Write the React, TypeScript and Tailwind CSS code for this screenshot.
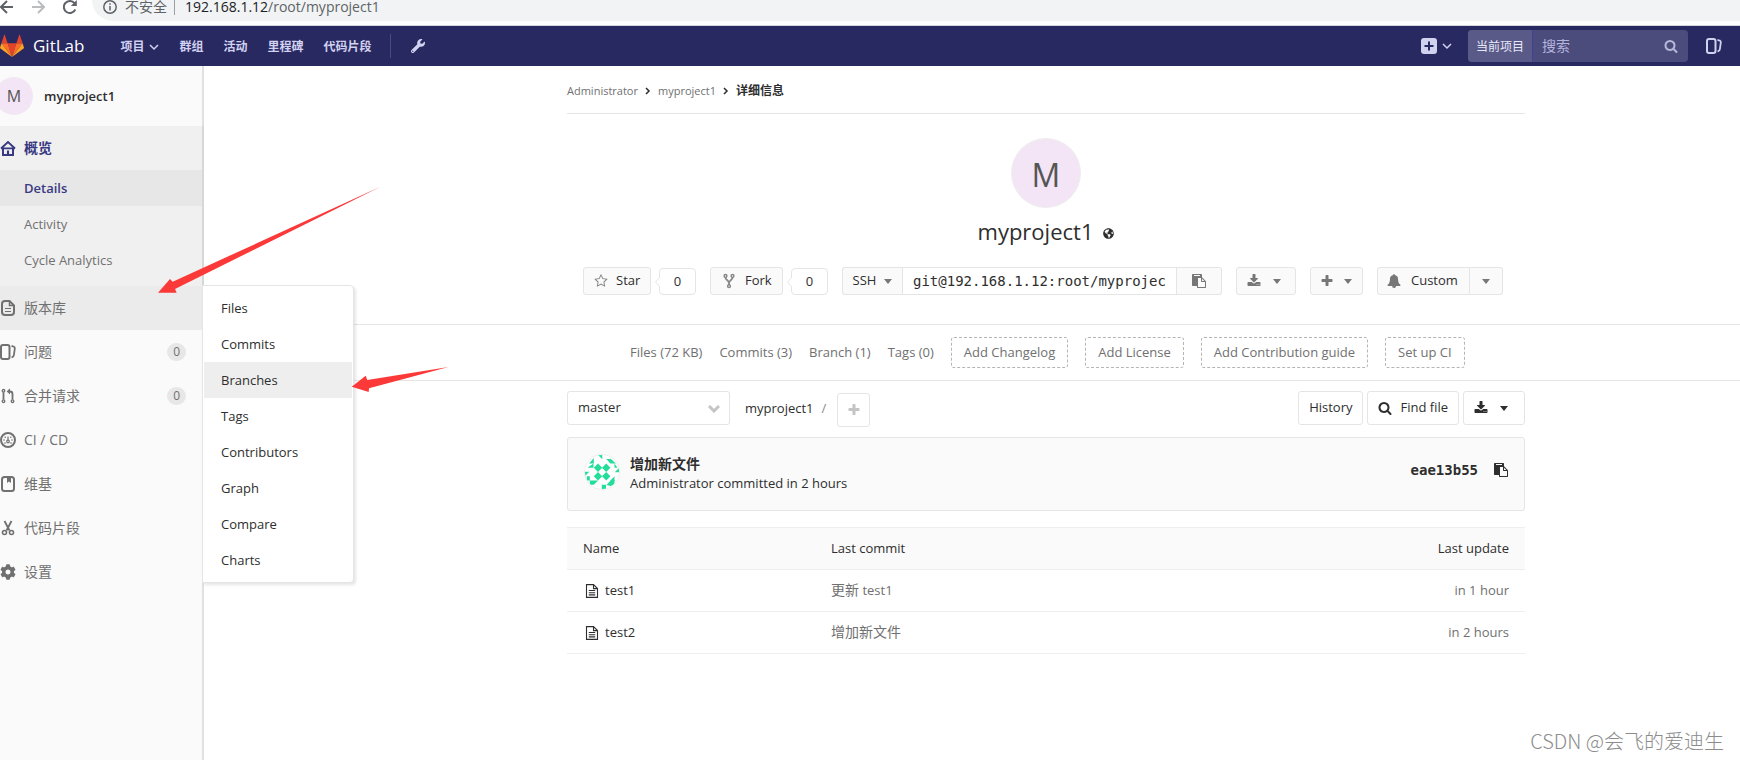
import React from "react";
import { FaWrench, FaGlobeAmericas, FaCog } from "react-icons/fa";

const FA = {
  paste:
    "M768 1664h896v-640h-416q-40 0-68-28t-28-68v-416h-384v1152zm256-1440v-64q0-13-9.5-22.5t-22.5-9.5h-704q-13 0-22.5 9.5t-9.5 22.5v64q0 13 9.5 22.5t22.5 9.5h704q13 0 22.5-9.5t9.5-22.5zm256 672h299l-299-299v299zm512 128v672q0 40-28 68t-68 28h-960q-40 0-68-28t-28-68v-160h-544q-40 0-68-28t-28-68v-1344q0-40 28-68t68-28h1088q40 0 68 28t28 68v328q21 13 36 28l408 408q28 28 48 76t20 88z",
  download:
    "M1344 1344q0-26-19-45t-45-19-45 19-19 45 19 45 45 19 45-19 19-45zm256 0q0-26-19-45t-45-19-45 19-19 45 19 45 45 19 45-19 19-45zm128-224v320q0 40-28 68t-68 28h-1472q-40 0-68-28t-28-68v-320q0-40 28-68t68-28h465l135 136q58 56 136 56t136-56l136-136h464q40 0 68 28t28 68zm-325-569q17 41-14 70l-448 448q-18 19-45 19t-45-19l-448-448q-31-29-14-70 17-39 59-39h256v-448q0-26 19-45t45-19h256q26 0 45 19t19 45v448h256q42 0 59 39z",
  bell:
    "M912 1696q0-16-16-16-59 0-101.500-42.500t-42.500-101.500q0-16-16-16t-16 16q0 73 51.500 124.500t124.500 51.500q16 0 16-16zm816-288q0 52-38 90t-90 38h-448q0 106-75 181t-181 75-181-75-75-181h-448q-52 0-90-38t-38-90q50-42 91-88t85-119.500 74.500-158.500 50-206 19.500-260q0-152 117-282.500t307-158.500q-8-19-8-39 0-40 28-68t68-28 68 28 28 68q0 20-8 39 190 28 307 158.500t117 282.500q0 139 19.500 260t50 206 74.500 158.500 85 119.500 91 88z",
  search:
    "M1216 832q0-185-131.500-316.500t-316.500-131.500-316.500 131.500-131.500 316.500 131.500 316.500 316.500 131.500 316.500-131.500 131.500-316.500zm512 832q0 52-38 90t-90 38q-54 0-90-38l-343-342q-179 124-399 124-143 0-273.500-55.500t-225-150-150-225-55.500-273.500 55.500-273.500 150-225 225-150 273.500-55.500 273.500 55.500 225 150 150 225 55.500 273.500q0 220-124 399l343 343q37 37 37 90z",
  star:
    "M1201 1004l306-297-422-62-189-382-189 382-422 62 306 297-73 421 378-199 377 199zm527-357q0 22-26 48l-363 354 86 500q1 7 1 20 0 50-41 50-19 0-40-12l-449-236-449 236q-22 12-40 12-21 0-31.500-14.500t-10.500-35.500q0-6 2-20l86-500-364-354q-25-27-25-48 0-37 56-46l502-73 225-455q19-41 49-41t49 41l225 455 502 73q56 9 56 46z",
  plus:
    "M1600 736v192q0 40-28 68t-68 28h-416v416q0 40-28 68t-68 28h-192q-40 0-68-28t-28-68v-416h-416q-40 0-68-28t-28-68v-192q0-40 28-68t68-28h416v-416q0-40 28-68t68-28h192q40 0 68 28t28 68v416h416q40 0 68 28t28 68z",
};

function Fa({ name, className = "" }: { name: keyof typeof FA; className?: string }) {
  return (
    <svg viewBox="0 0 1792 1792" fill="currentColor" aria-hidden="true" className={"size-3.5 shrink-0 " + className}>
      <path d={FA[name]} />
    </svg>
  );
}

function Caret() {
  return (
    <svg viewBox="0 0 8 5" fill="currentColor" aria-hidden="true" className="h-[5px] w-2 shrink-0">
      <path d="M0 0h8L4 5z" />
    </svg>
  );
}

function ChevronDown({ className = "" }: { className?: string }) {
  return (
    <svg viewBox="0 0 10 7" fill="none" stroke="currentColor" strokeWidth="1.5" aria-hidden="true" className={"h-[7px] w-2.5 shrink-0 " + className}>
      <path d="M1 1l4 4 4-4" />
    </svg>
  );
}

function Icon({ children }: { children: React.ReactNode }) {
  return (
    <svg viewBox="0 0 16 16" fill="none" stroke="currentColor" strokeWidth="2" aria-hidden="true" className="size-4 shrink-0">
      {children}
    </svg>
  );
}

const HomeIcon = () => (
  <Icon>
    <path d="M1 8.500L8 2l7 6.500M1 8.300h14" strokeWidth="1.800" />
    <path d="M3 8.500V15h10V8.500" />
    <path d="M8 10.500V15" strokeWidth="2.200" />
  </Icon>
);
const DocIcon = () => (
  <Icon>
    <path d="M5 1h4.500L14 5.500V12a3 3 0 0 1-3 3H5a3 3 0 0 1-3-3V4a3 3 0 0 1 3-3z" />
    <path d="M9.500 1v4.500H14" strokeWidth="1.500" />
    <path d="M5 8.500h6M5 11.500h6" strokeWidth="1.200" />
  </Icon>
);
const IssuesIcon = () => (
  <Icon>
    <rect x="1" y="1" width="8.500" height="14" rx="2" />
    <path d="M11.500 2l1.500.3a2 2 0 0 1 1.800 2.200L13.900 11a2.500 2.500 0 0 1-1.600 2.200l-.8.2" strokeWidth="1.800" />
  </Icon>
);
const MergeIcon = () => (
  <Icon>
    <g strokeWidth="1.300">
      <circle cx="3.500" cy="2.800" r="1.300" />
      <circle cx="3.500" cy="13.200" r="1.300" />
      <circle cx="12.500" cy="13.200" r="1.300" />
    </g>
    <path d="M3.500 4.500v7M12.500 11.500V6a2.500 2.500 0 0 0-2.500-2.500H8.500" strokeWidth="1.800" />
    <path d="M10 .3v6.200L6.700 3.500z" fill="currentColor" stroke="none" />
  </Icon>
);
const GaugeIcon = () => (
  <Icon>
    <circle cx="8" cy="8" r="7" />
    <path d="M8 4.500v4" strokeWidth="1.200" />
    <circle cx="8" cy="9.500" r="1.300" strokeWidth="1.200" />
    <g fill="currentColor" stroke="none">
      <circle cx="4" cy="8" r=".8" />
      <circle cx="12" cy="8" r=".8" />
      <circle cx="5.200" cy="5.200" r=".8" />
      <circle cx="10.800" cy="5.200" r=".8" />
      <circle cx="5" cy="11" r=".8" />
      <circle cx="11" cy="11" r=".8" />
    </g>
  </Icon>
);
const BookIcon = () => (
  <Icon>
    <rect x="2" y="1" width="12" height="14" rx="2.500" />
    <path d="M7 1h4v6L9 5.500 7 7z" fill="currentColor" stroke="none" />
  </Icon>
);
const ScissorsIcon = () => (
  <Icon>
    <path d="M4.500 1l5 9.500M11.500 1l-5 9.500" strokeWidth="1.800" />
    <circle cx="4.500" cy="12.500" r="2" strokeWidth="1.600" />
    <circle cx="11.500" cy="12.500" r="2" strokeWidth="1.600" />
  </Icon>
);

const menu = [
  { label: "问题", icon: <IssuesIcon />, count: 0 },
  { label: "合并请求", icon: <MergeIcon />, count: 0 },
  { label: "CI / CD", icon: <GaugeIcon /> },
  { label: "维基", icon: <BookIcon /> },
  { label: "代码片段", icon: <ScissorsIcon /> },
  { label: "设置", icon: <FaCog className="size-4 shrink-0" /> },
];

const flyout = ["Files", "Commits", "Branches", "Tags", "Contributors", "Graph", "Compare", "Charts"];

function BrowserBar() {
  return (
    <div className="flex h-[26px] items-start border-b border-[#d5d7da] bg-white text-[#5f6368]">
      <div className="flex h-3.5 w-[92px] shrink-0 items-center">
        <svg viewBox="0 0 14 14" fill="none" stroke="currentColor" strokeWidth="2" className="size-3.5" aria-hidden="true">
          <path d="M13 7H1.500M7 1L1 7l6 6" />
        </svg>
        <svg viewBox="0 0 14 14" fill="none" stroke="#babcbe" strokeWidth="2" className="ml-[17px] size-3.5" aria-hidden="true">
          <path d="M1 7h11.500M7 1l6 6-6 6" />
        </svg>
        <svg viewBox="0 0 14 14" fill="none" stroke="currentColor" strokeWidth="2" className="ml-[18px] size-3.5" aria-hidden="true">
          <path d="M12.300 9.500A6 6 0 1 1 11.500 3.200" />
          <path d="M13.800 0v6H7.800z" fill="currentColor" stroke="none" />
        </svg>
      </div>
      <div className="flex h-[21px] grow items-start rounded-bl-full bg-[#f1f3f4] pl-[11px]">
        <div className="flex h-3.5 items-center">
          <svg viewBox="0 0 14 14" fill="none" stroke="currentColor" strokeWidth="1.500" className="size-3.5" aria-hidden="true">
            <circle cx="7" cy="7" r="6.200" />
            <path d="M7 6v4.500M7 3.200v1.600" />
          </svg>
          <span className="ml-2 text-sm leading-none">不安全</span>
          <span className="mr-2.5 ml-[7px] h-4 w-px bg-[#9aa0a6]" />
          <span className="font-['Open_Sans',sans-serif] text-sm leading-none">
            <span className="text-[#202124]">192.168.1.12</span>/root/myproject1
          </span>
        </div>
      </div>
    </div>
  );
}

function Navbar() {
  return (
    <header className="flex h-10 items-center bg-[#292961] text-[#d1d1f0]">
      <a href="#" className="flex items-center text-[17px] text-white">
        <svg viewBox="0 0 36 36" className="h-6 w-6" aria-hidden="true">
          <path fill="#e24329" d="M18 34.400l6.600-20.400H11.400z" />
          <path fill="#fc6d26" d="M18 34.400L11.400 14H2.100z" />
          <path fill="#fca326" d="M2.100 14L.1 20.200c-.2.600 0 1.200.5 1.500L18 34.400z" />
          <path fill="#e24329" d="M2.100 14h9.300l-4-12.300c-.2-.6-1.100-.6-1.300 0z" />
          <path fill="#fc6d26" d="M18 34.400L24.600 14h9.300z" />
          <path fill="#fca326" d="M33.900 14l2 6.200c.2.600 0 1.200-.5 1.500L18 34.400z" />
          <path fill="#e24329" d="M33.900 14h-9.300l4-12.300c.2-.6 1.100-.6 1.300 0z" />
        </svg>
        <span className="ml-[9px]">GitLab</span>
      </a>
      <nav className="ml-9 flex items-center gap-5 pt-0.5 text-xs font-bold">
        <a href="#" className="flex items-center gap-[5px]">
          项目
          <ChevronDown />
        </a>
        <a href="#">群组</a>
        <a href="#">活动</a>
        <a href="#">里程碑</a>
        <a href="#">代码片段</a>
      </nav>
      <span className="ml-[18px] h-6 w-px bg-[#4b4b80]" />
      <a href="#" aria-label="Admin area" className="ml-5">
        <FaWrench className="size-3.5" />
      </a>
      <div className="ml-auto flex items-center">
        <button type="button" aria-label="New" className="flex items-center gap-[5px]">
          <svg viewBox="0 0 16 16" className="size-4" aria-hidden="true">
            <rect width="16" height="16" rx="3" fill="#d1d1f0" />
            <path d="M8 3.500v9M3.500 8h9" stroke="#292961" strokeWidth="2" />
          </svg>
          <ChevronDown />
        </button>
        <div className="ml-4 flex h-8 w-[220px] items-center overflow-hidden rounded bg-[#4c4c7c]">
          <span className="flex h-8 w-[65px] shrink-0 items-center justify-center border-r border-[#41419a] bg-[#5a5a88] pt-0.5 text-xs text-[#e8e8f8]">当前项目</span>
          <input
            type="text"
            aria-label="搜索"
            placeholder="搜索"
            className="w-0 grow bg-transparent pl-[9px] text-sm outline-none placeholder:text-[#b4b4dc]"
          />
          <Fa name="search" className="mr-2.5 text-[#b6b6d8]" />
        </div>
        <a href="#" aria-label="Issues" className="mr-[18px] ml-[18px]">
          <IssuesIcon />
        </a>
      </div>
    </header>
  );
}

function Sidebar() {
  return (
    <aside className="relative w-[204px] shrink-0 border-r-2 border-[#e1e1e1] bg-[#fafafa] text-[#707070]">
      <a href="#" className="flex h-[60px] items-center">
        <span className="-ml-[5px] flex size-[38px] items-center justify-center rounded-full bg-[#f3e5f5] text-base text-[#555]">M</span>
        <span className="ml-[11px] pt-0.5 font-semibold text-[#2e2e2e]">myproject1</span>
      </a>
      <div className="-mr-0.5 border-r-2 border-[#d7d7d7] bg-[#f0f0f0] pb-2">
        <a href="#" className="flex h-11 items-center gap-2 text-sm font-semibold text-[#393982]">
          <HomeIcon />
          概览
        </a>
        <a href="#" className="flex h-9 items-center bg-[#e7e7e7] pt-0.5 pl-6 font-semibold text-[#393982]">Details</a>
        <a href="#" className="flex h-9 items-center pt-0.5 pl-6">Activity</a>
        <a href="#" className="flex h-9 items-center pt-0.5 pl-6">Cycle Analytics</a>
      </div>
      <div className="relative bg-[#ebebeb]">
        <a href="#" className="flex h-11 items-center gap-2 text-sm">
          <DocIcon />
          版本库
        </a>
        <div className="absolute -top-px left-full z-10 w-[152px] rounded-r-sm border border-[#e5e5e5] bg-white px-px py-1 text-[#2e2e2e] shadow-[2px_2px_3px_rgba(0,0,0,0.1)]">
          {flyout.map((f) => (
            <a key={f} href="#" className={f === "Branches" ? "flex h-9 items-center bg-[#eee] pt-0.5 pl-[17px]" : "flex h-9 items-center pt-0.5 pl-[17px]"}>
              {f}
            </a>
          ))}
        </div>
      </div>
      {menu.map((m) => (
        <a key={m.label} href="#" className="flex h-11 items-center gap-2 pr-4">
          {m.icon}
          <span className="text-sm">{m.label}</span>
          {m.count !== undefined && <span className="ml-auto rounded-full bg-[#e7e7e7] px-1.5 text-xs leading-[18px]">{m.count}</span>}
        </a>
      ))}
    </aside>
  );
}

function CountBox() {
  return (
    <span className="relative ml-2 flex h-[27px] w-[37px] items-center justify-center self-end rounded-sm border border-[#e5e5e5] bg-white">
      0
      <svg viewBox="0 0 5 10" className="absolute top-2 -left-[5px] h-2.5 w-[5px]" aria-hidden="true">
        <path d="M5 0L.6 5 5 10" fill="#fff" stroke="#e5e5e5" />
      </svg>
    </span>
  );
}

const btn = "flex h-7 items-center border border-[#e5e5e5] bg-[#fafafa]";
const treeBtn = "flex h-[34px] items-center rounded-[3px] border border-[#e5e5e5] bg-white";

function ProjectActions() {
  return (
    <div className="flex items-center gap-3.5 pl-4">
      <div className="flex">
        <button type="button" className={btn + " w-[68px] gap-2 rounded-[3px] pl-2.5"}>
          <Fa name="star" className="text-[#888]" />
          Star
        </button>
        <CountBox />
      </div>
      <div className="flex">
        <button type="button" className={btn + " w-[73px] gap-2 rounded-[3px] pl-2.5"}>
          <svg viewBox="0 0 16 16" fill="none" stroke="#888" strokeWidth="1.500" className="size-4" aria-hidden="true">
            <circle cx="4.500" cy="3" r="1.400" />
            <circle cx="11.500" cy="3" r="1.400" />
            <circle cx="8" cy="13.200" r="1.400" />
            <path d="M4.500 4.500c0 3 3.500 2.500 3.500 5.500v2M11.500 4.500c0 3-3.500 2.500-3.500 5.500" strokeWidth="1.800" />
          </svg>
          Fork
        </button>
        <CountBox />
      </div>
      <div className="flex">
        <button type="button" className={btn + " w-[60px] justify-center gap-2 rounded-l-[3px] border-r-0"}>
          SSH
          <span className="text-[#777]"><Caret /></span>
        </button>
        <input
          type="text"
          readOnly
          aria-label="Project clone URL"
          defaultValue="git@192.168.1.12:root/myprojec"
          className="h-7 w-[275px] border border-[#e5e5e5] bg-white px-2.5 font-['DejaVu_Sans_Mono',monospace] text-sm outline-none"
        />
        <button type="button" aria-label="Copy URL" className={btn + " w-[45px] justify-center rounded-r-[3px] border-l-0 text-[#777]"}>
          <Fa name="paste" />
        </button>
      </div>
      <button type="button" aria-label="Download" className={btn + " w-[60px] gap-3 rounded-[3px] pl-2.5 text-[#777]"}>
        <Fa name="download" />
        <Caret />
      </button>
      <button type="button" aria-label="Create new" className={btn + " w-[53px] gap-2.5 rounded-[3px] pl-[9px] text-[#777]"}>
        <Fa name="plus" />
        <Caret />
      </button>
      <div className="flex">
        <button type="button" className={btn + " w-[93px] gap-2.5 rounded-l-[3px] pl-[9px]"}>
          <Fa name="bell" className="text-[#777]" />
          Custom
        </button>
        <button type="button" aria-label="Notification options" className={btn + " w-[33px] justify-center rounded-r-[3px] border-l-0 text-[#777]"}>
          <Caret />
        </button>
      </div>
    </div>
  );
}

function Identicon() {
  return (
    <svg viewBox="0 0 36 36" className="size-9" aria-hidden="true">
      <defs>
        <clipPath id="round"><circle cx="18" cy="18" r="17" /></clipPath>
      </defs>
      <circle cx="18" cy="18" r="17.500" fill="#fff" stroke="#eee" />
      <g fill="#23dd9b" clipPath="url(#round)">
        <path d="M14 9.500l4.200 4.300L14 18l-4.200-4.200zM22.200 9.500l4.200 4.300-4.200 4.200-4.200-4.200zM14 18l4.200 4.200-4.200 4.300-4.200-4.300zM22.200 18l4.200 4.200-4.200 4.300-4.200-4.300z" />
        <path d="M14 1h4.300v4.300zM22 35v-4.300h-4.200V35zM1 22h0v-4.200h4.300zM35 14v4.300h-4.300z" />
        <path d="M9.800 4v5.500H5zM9.500 9.500v4.300H3.500zM26.300 4.500l5.700 5h-5.700zM26.300 9.500l-4-4.500h4zM30.500 9.500l3 4.300h-3z" />
        <path d="M9.800 26.500l-4 5v-5zM5.800 26.500v-4.300l-3 0 0 4.300zM5.800 26.500h8.500l-4.500 4.300H5.800zM26.300 32v-5.500h5zM26.300 26.500l4.200-4.300v8l-4.200 2zM22.500 31l4-4.500V32z" />
      </g>
    </svg>
  );
}

function FileIcon() {
  return (
    <svg viewBox="0 0 14 14" fill="none" stroke="currentColor" strokeWidth="1.100" className="size-3.5" aria-hidden="true">
      <path d="M1.500.6h7l4 4v8.800h-11zM8.500.6v4h4M3.800 6.500h6.400M3.800 8.700h6.400M3.800 10.900h6.400" />
    </svg>
  );
}

function FilesPanel() {
  return (
    <section className="pt-2.5 pr-[215px] pl-[363px]">
      <div className="flex items-start">
        <div className="relative w-[163px]">
          <select aria-label="Branch" className="h-[34px] w-full appearance-none rounded-[3px] border border-[#e5e5e5] bg-white pl-2.5">
            <option>master</option>
          </select>
          <svg viewBox="0 0 12 8" fill="none" stroke="#c4c4c4" strokeWidth="3" className="pointer-events-none absolute top-3.5 right-2.5 h-2 w-3" aria-hidden="true">
            <path d="M1 1l5 5 5-5" />
          </svg>
        </div>
        <a href="#" className="ml-[15px] leading-[34px]">myproject1</a>
        <span className="ml-2 leading-[34px] text-[#888]">/</span>
        <button type="button" aria-label="Add to tree" className={treeBtn + " mt-0.5 ml-[11px] w-[33px] justify-center text-[#c4c4c4]"}>
          <Fa name="plus" />
        </button>
        <div className="ml-auto flex gap-1">
          <button type="button" className={treeBtn + " px-2.5"}>History</button>
          <button type="button" className={treeBtn + " gap-2 px-2.5"}>
            <Fa name="search" />
            Find file
          </button>
          <button type="button" aria-label="Download" className={treeBtn + " w-[62px] gap-3 pl-2.5"}>
            <Fa name="download" />
            <Caret />
          </button>
        </div>
      </div>

      <div className="mt-2.5 flex items-start rounded-[3px] border border-[#e5e5e5] bg-[#fafafa] px-4 pt-4 pb-[17px]">
        <Identicon />
        <div className="ml-2.5 leading-5">
          <a href="#" className="block pt-px text-sm leading-[18px] font-bold">增加新文件</a>
          <p>Administrator committed in 2 hours</p>
        </div>
        <div className="mt-1.5 ml-auto flex items-center gap-4 font-['DejaVu_Sans_Mono',monospace] text-sm font-bold">
          <a href="#">eae13b55</a>
          <button type="button" aria-label="Copy commit SHA">
            <Fa name="paste" className="size-3.5" />
          </button>
        </div>
      </div>

      <table className="mt-4 w-full border-collapse text-left text-[#707070]">
        <thead>
          <tr className="h-[42px] border-y border-[#eee] bg-[#fafafa] text-[#2e2e2e]">
            <th className="w-[248px] pl-4 font-normal">Name</th>
            <th className="pl-4 font-normal">Last commit</th>
            <th className="pr-4 text-right font-normal">Last update</th>
          </tr>
        </thead>
        <tbody>
          <tr className="h-[42px] border-b border-[#eee]">
            <td className="pl-[18px] text-[#2e2e2e]">
              <a href="#" className="flex items-center gap-1.5"><FileIcon />test1</a>
            </td>
            <td className="pl-4"><a href="#"><span className="text-sm leading-5">更新</span> test1</a></td>
            <td className="pr-4 text-right">in 1 hour</td>
          </tr>
          <tr className="h-[42px] border-b border-[#eee]">
            <td className="pl-[18px] text-[#2e2e2e]">
              <a href="#" className="flex items-center gap-1.5"><FileIcon />test2</a>
            </td>
            <td className="pl-4"><a href="#" className="text-sm">增加新文件</a></td>
            <td className="pr-4 text-right">in 2 hours</td>
          </tr>
        </tbody>
      </table>
    </section>
  );
}

export default function App() {
  const dashed = "flex h-[31px] items-center rounded-[3px] border border-dashed border-[#b5b5b5] px-3";
  return (
    <div className="relative flex min-h-screen flex-col overflow-hidden bg-white font-['Open_Sans','Noto_Sans_CJK_SC',sans-serif] text-[13px] text-[#2e2e2e]">
      <BrowserBar />
      <Navbar />
      <div className="flex grow">
        <Sidebar />
        <main className="min-w-0 grow">
          <div className="pr-[215px] pl-[363px]">
            <nav aria-label="Breadcrumb" className="flex h-12 items-center gap-[7px] border-b border-[#e5e5e5] pt-[3px] text-[11px] text-[#707070]">
              <a href="#">Administrator</a>
              <svg viewBox="0 0 6 8" fill="none" stroke="#2e2e2e" strokeWidth="1.500" className="h-2 w-1.5" aria-hidden="true"><path d="M1 1l3 3-3 3" /></svg>
              <a href="#">myproject1</a>
              <svg viewBox="0 0 6 8" fill="none" stroke="#2e2e2e" strokeWidth="1.500" className="h-2 w-1.5" aria-hidden="true"><path d="M1 1l3 3-3 3" /></svg>
              <a href="#" className="text-xs font-bold text-[#2e2e2e]">详细信息</a>
            </nav>
            <div className="flex flex-col items-center pt-6">
              <div className="flex size-[70px] items-center justify-center rounded-full border border-[#eee] bg-[#f3e5f5] pt-1 text-[32px] text-[#555]">M</div>
              <h1 className="mt-[7px] flex items-center gap-2.5 text-[22px] leading-8">
                myproject1
                <FaGlobeAmericas className="mt-1 size-[11px]" />
              </h1>
            </div>
            <div className="pt-5 pb-[29px]">
              <ProjectActions />
            </div>
          </div>
          <nav aria-label="Project statistics" className="flex items-center gap-[17px] border-y border-[#e5e5e5] py-3 pl-[426px] whitespace-nowrap text-[#707070]">
            <a href="#">Files (72 KB)</a>
            <a href="#">Commits (3)</a>
            <a href="#">Branch (1)</a>
            <a href="#">Tags (0)</a>
            <a href="#" className={dashed}>Add Changelog</a>
            <a href="#" className={dashed}>Add License</a>
            <a href="#" className={dashed}>Add Contribution guide</a>
            <a href="#" className={dashed}>Set up CI</a>
          </nav>
          <FilesPanel />
        </main>
      </div>

      <svg width="460" height="400" viewBox="0 0 460 400" fill="#fb3939" className="pointer-events-none absolute top-0 left-0 z-20" aria-hidden="true">
        <path d="M158 292.700L170 279l2.700 2.700L381 186.500 175 289l1.700 3.700z" />
        <path d="M351.700 386.700l14-11 1.600 4.300L448.500 367 369 388.300l-.3 3.700z" />
      </svg>
      <p className="absolute right-4 bottom-[5px] text-[20px] leading-7 font-light text-[#8c8c8c] [text-shadow:1px_1px_1px_rgba(255,255,255,0.8)] font-['Noto_Sans_CJK_SC',sans-serif]">
        CSDN @会飞的爱迪生
      </p>
    </div>
  );
}
